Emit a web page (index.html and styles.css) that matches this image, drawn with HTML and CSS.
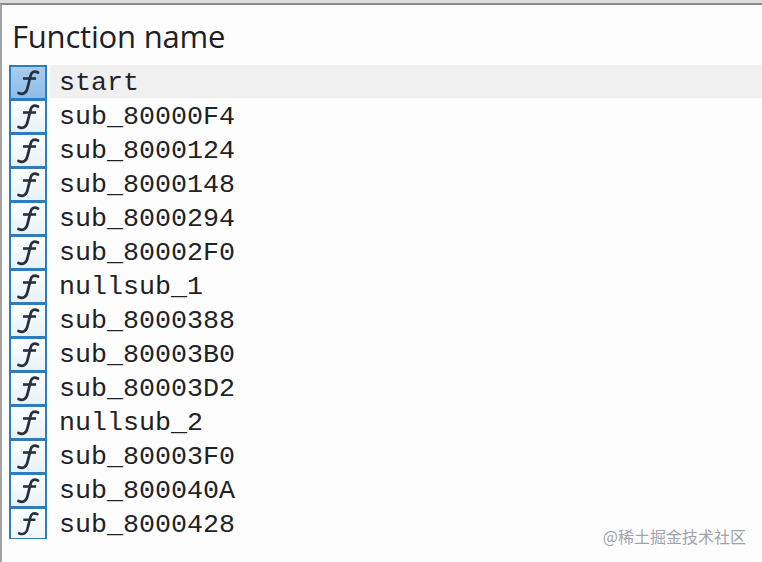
FILE: index.html
```html
<!DOCTYPE html>
<html lang="en">
<head>
<meta charset="utf-8">
<title>Function name</title>
<link rel="stylesheet" href="styles.css">
</head>
<body>
<svg class="defs" width="0" height="0" aria-hidden="true">
  <symbol id="f" viewBox="0 0 34 31">
    <path d="M27 5.500C23 3.500 20.500 5 19.500 9L16.500 21C15.500 26 12 28 7.500 26" fill="none" stroke="#27303e" stroke-width="2.800" stroke-linecap="round"/>
    <path d="M12 11.500H25" fill="none" stroke="#27303e" stroke-width="2.600"/>
  </symbol>
</svg>
<main class="window">
  <header class="title">Function name</header>
  <ul class="list">
    <li class="row row-selected"><svg class="icon"><use href="#f"/></svg><span class="name">start</span></li>
    <li class="row"><svg class="icon"><use href="#f"/></svg><span class="name">sub_80000F4</span></li>
    <li class="row"><svg class="icon"><use href="#f"/></svg><span class="name">sub_8000124</span></li>
    <li class="row"><svg class="icon"><use href="#f"/></svg><span class="name">sub_8000148</span></li>
    <li class="row"><svg class="icon"><use href="#f"/></svg><span class="name">sub_8000294</span></li>
    <li class="row"><svg class="icon"><use href="#f"/></svg><span class="name">sub_80002F0</span></li>
    <li class="row"><svg class="icon"><use href="#f"/></svg><span class="name">nullsub_1</span></li>
    <li class="row"><svg class="icon"><use href="#f"/></svg><span class="name">sub_8000388</span></li>
    <li class="row"><svg class="icon"><use href="#f"/></svg><span class="name">sub_80003B0</span></li>
    <li class="row"><svg class="icon"><use href="#f"/></svg><span class="name">sub_80003D2</span></li>
    <li class="row"><svg class="icon"><use href="#f"/></svg><span class="name">nullsub_2</span></li>
    <li class="row"><svg class="icon"><use href="#f"/></svg><span class="name">sub_80003F0</span></li>
    <li class="row"><svg class="icon"><use href="#f"/></svg><span class="name">sub_800040A</span></li>
    <li class="row row-last"><svg class="icon"><use href="#f"/></svg><span class="name">sub_8000428</span></li>
  </ul>
</main>
<div class="watermark">@稀土掘金技术社区</div>
</body>
</html>
```
FILE: styles.css
```css
html, body {
  margin: 0;
  height: 562px;
  overflow: hidden;
  background: #fdfdfe;
}
.defs {
  display: block;
  height: 0;
}
.window {
  height: 559px;
  margin-top: 3px;
  border-top: 2px solid #8a8c90;
  border-left: 2px solid #a2a4a9;
  background: #fdfdfe;
  box-sizing: border-box;
  padding-left: 7px;
}
body::before {
  content: "";
  position: absolute;
  left: 0;
  top: 0;
  width: 100%;
  height: 3px;
  background: #dcdcde;
}
.title {
  height: 60px;
  padding: 13px 0 0 3px;
  box-sizing: border-box;
  font: 31px/36px "Open Sans", sans-serif;
  letter-spacing: -0.2px;
  color: #1d2025;
}
.list {
  list-style: none;
  margin: 0;
  padding: 0;
}
.row {
  display: flex;
  align-items: flex-start;
  height: 34px;
}
.icon {
  flex: none;
  width: 38px;
  height: 34px;
  box-sizing: border-box;
  border: 2px solid #2f7cbd;
  border-bottom-width: 1px;
  background: linear-gradient(#fdfeff, #e6f2fb);
}
.row-selected .icon {
  background: linear-gradient(#a6cdf0, #8fbce8);
}
.row-last .icon {
  height: 32px;
  background: linear-gradient(#fdfeff, #eef6fc);
}
.name {
  flex: 1;
  height: 33px;
  margin-left: 3px;
  padding-left: 9px;
  font: 26.670px/37px "Liberation Mono", monospace;
  color: #1f2226;
}
.row-selected .name {
  background: #f0f0f0;
}
.watermark {
  position: absolute;
  right: 16px;
  top: 525px;
  font: 16px/22px "Noto Sans CJK SC", sans-serif;
  color: #a0a3a8;
}
```
